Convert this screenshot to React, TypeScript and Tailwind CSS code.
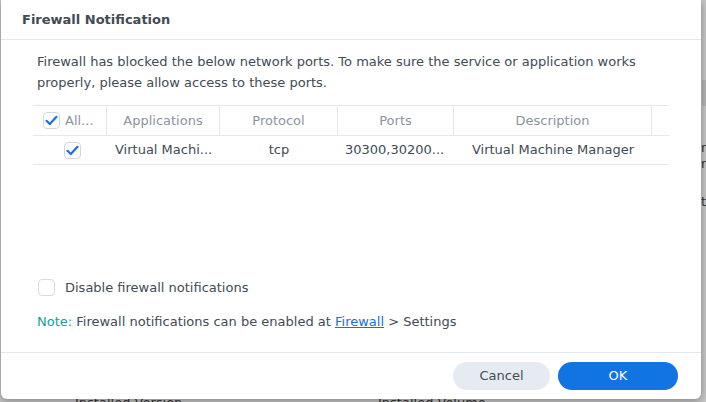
import React from "react";

function Check({ checked }: { checked: boolean }) {
  return (
    <div className="w-[17px] h-[17px] rounded-[4px] border border-[#cfd6e0] bg-white flex items-center justify-center shrink-0">
      {checked && (
        <svg width="13" height="11" viewBox="0 0 13 11">
          <path d="M1.5 5.8 L4.8 9 L11.5 1.8" fill="none" stroke="#1a6fe0" strokeWidth="2.2" strokeLinecap="round" strokeLinejoin="round" />
        </svg>
      )}
    </div>
  );
}

export default function App() {
  const font = { fontFamily: '"DejaVu Sans", Verdana, sans-serif' };
  return (
    <div className="relative w-[706px] h-[402px] overflow-hidden bg-[#c6c6c6]" style={font}>
      {/* background app fragments */}
      <div className="absolute left-[701px] top-[140px] text-[13px] leading-[16px] text-[#333]">
        <div>ne</div>
        <div>rf</div>
        <div className="mt-[22px]">t</div>
      </div>
      <div className="absolute left-[702px] top-[80px] w-[10px] h-[26px] bg-[#b4b4b4]" />
      <div className="absolute left-[75px] top-[393px] text-[13px] text-[#333]">Installed Version</div>
      <div className="absolute left-[378px] top-[393px] text-[13px] text-[#333]">Installed Volume</div>

      {/* dialog */}
      <div className="absolute left-[1px] top-0 w-[700px] h-[399px] bg-white rounded-b-[6px] shadow-[0_2px_8px_rgba(0,0,0,0.35)] flex flex-col">
        <div className="h-[40px] border-b border-[#e3e7ee] flex items-center pl-[21px] text-[13px] font-bold text-[#414b55]">
          Firewall Notification
        </div>
        <div className="flex-1 flex flex-col pl-[32px] pr-[32px] pt-[11px]">
          <div className="pl-[4px] text-[13px] leading-[21px] text-[#414b55]">
            Firewall has blocked the below network ports. To make sure the service or application works properly, please allow access to these ports.
          </div>
          <div className="mt-[12px] border-t border-[#e3e7ee] text-[13px]">
            <div className="flex h-[30px] border-b border-[#e3e7ee] text-[#8a949e] items-stretch">
              <div className="w-[74px] flex items-center pl-[10px] gap-[5px] border-r border-[#e3e7ee]">
                <Check checked />
                <span>All...</span>
              </div>
              <div className="w-[113px] flex items-center justify-center border-r border-[#e3e7ee]">Applications</div>
              <div className="w-[118px] flex items-center justify-center border-r border-[#e3e7ee]">Protocol</div>
              <div className="w-[116px] flex items-center justify-center border-r border-[#e3e7ee]">Ports</div>
              <div className="w-[198px] flex items-center justify-center border-r border-[#e3e7ee]">Description</div>
              <div className="flex-1" />
            </div>
            <div className="flex h-[29px] border-b border-[#e3e7ee] text-[#414b55] items-stretch">
              <div className="w-[74px] flex items-center justify-center pl-[5px]">
                <Check checked />
              </div>
              <div className="w-[113px] flex items-center px-[8px] whitespace-nowrap overflow-hidden">Virtual Machi...</div>
              <div className="w-[118px] flex items-center justify-center">tcp</div>
              <div className="w-[116px] flex items-center px-[7px] whitespace-nowrap overflow-hidden">30300,30200...</div>
              <div className="w-[198px] flex items-center justify-center whitespace-nowrap">Virtual Machine Manager</div>
              <div className="flex-1" />
            </div>
          </div>
          <div className="flex-1" />
          <div className="flex items-center gap-[10px] pl-[5px] text-[13px] text-[#414b55]">
            <div className="w-[17px] h-[17px] rounded-[4px] border border-[#d5dbe3] bg-white" />
            <span>Disable firewall notifications</span>
          </div>
          <div className="mt-[14px] mb-[21px] pl-[4px] text-[13px] text-[#414b55] whitespace-nowrap">
            <span className="text-[#12a19a]">Note:</span> Firewall notifications can be enabled at{" "}
            <span className="text-[#1a6fe0] underline">Firewall</span> &gt; Settings
          </div>
        </div>
        <div className="h-[47px] border-t border-[#e3e7ee] flex items-center justify-end pr-[23px] gap-[8px] shrink-0">
          <button className="w-[97px] h-[28px] rounded-full bg-[#e6ebf2] text-[13px] text-[#414b55]">Cancel</button>
          <button className="w-[120px] h-[28px] rounded-full bg-[#1273e3] text-[13px] text-white">OK</button>
        </div>
      </div>
    </div>
  );
}
